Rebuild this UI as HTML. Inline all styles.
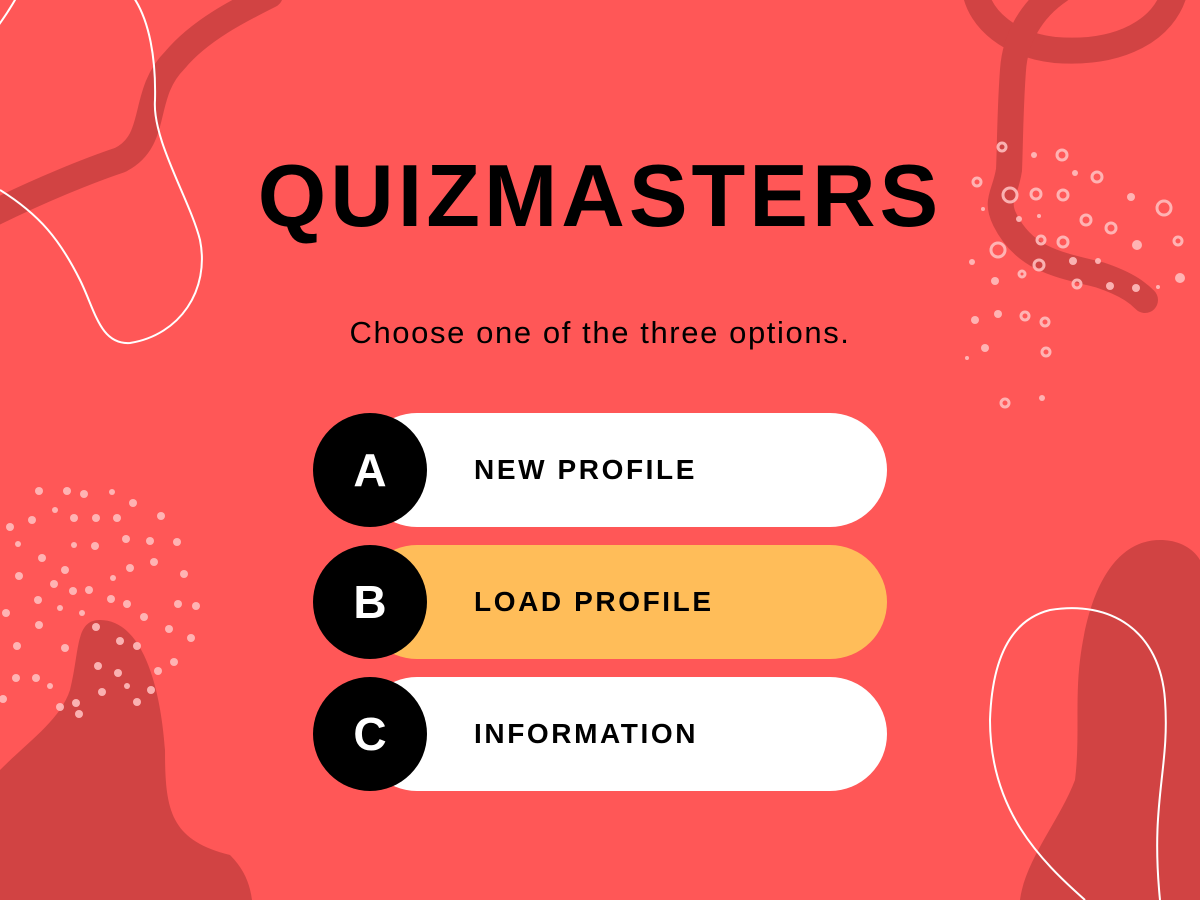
<!DOCTYPE html>
<html><head><meta charset="utf-8"><style>
html,body{margin:0;padding:0}
body{width:1200px;height:900px;background:#FF5757;position:relative;overflow:hidden;font-family:"Liberation Sans",sans-serif}
svg.bg{position:absolute;left:0;top:0}
.title{position:absolute;left:0;width:1200px;top:146px;text-align:center;font-size:88px;font-weight:bold;letter-spacing:4px;color:#000;line-height:100px}
.sub{position:absolute;left:0;width:1200px;top:313px;text-align:center;font-size:31px;letter-spacing:1.6px;color:#000;line-height:40px}
.pill{position:absolute;left:360px;width:527px;height:114px;border-radius:57px;background:#fff}
.circ{position:absolute;left:313px;width:114px;height:114px;border-radius:50%;background:#000;color:#fff;font-weight:bold;font-size:46px;line-height:114px;text-align:center}
.lbl{position:absolute;left:474px;font-weight:bold;font-size:28px;line-height:114px;color:#000;letter-spacing:2.6px}
</style></head><body>
<svg class="bg" width="1200" height="900" viewBox="0 0 1200 900">
<g fill="none" stroke="#D14343" stroke-width="26" stroke-linecap="round">
<path d="M-10 215 C40 190 90 170 120 160 C160 140 140 95 175 60 C200 30 240 10 270 -5"/>
<path d="M1175 -10 C1165 30 1120 55 1055 50 C1010 45 980 20 975 -10"/>
<path d="M1060 -10 C1030 10 1015 40 1013 70 C1010 110 1010 150 1009 170 C1005 195 995 200 1005 220 C1025 260 1060 265 1100 275 C1130 285 1140 295 1145 300"/>
</g>
<path d="M0 770 C30 740 60 720 70 690 C80 650 75 620 100 620 C140 620 160 680 165 750 C165 810 170 840 230 855 C245 870 250 885 252 900 L0 900 Z" fill="#D14343"/>
<path d="M1020 900 C1025 860 1060 820 1075 780 C1080 740 1075 700 1080 660 C1090 580 1120 540 1160 540 C1190 540 1200 560 1200 560 L1200 900 Z" fill="#D14343"/>
<g fill="none" stroke="#fff" stroke-width="2">
<path d="M-5 30 C10 10 18 -5 20 -10 M132 -5 C150 20 156 60 155 100 C152 140 190 200 200 240 C210 290 180 335 130 343 C100 345 95 310 80 280 C60 240 40 215 0 190"/>
<path d="M1085 900 C1040 860 990 810 990 720 C992 660 1010 620 1050 610 C1110 600 1160 630 1165 700 C1170 770 1150 800 1160 900"/>
</g>
<g fill="#FFBDBD" opacity="0.9">
<circle cx="39" cy="491" r="4"/><circle cx="67" cy="491" r="4"/><circle cx="84" cy="494" r="4"/><circle cx="112" cy="492" r="3"/><circle cx="133" cy="503" r="4"/>
<circle cx="10" cy="527" r="4"/><circle cx="32" cy="520" r="4"/><circle cx="55" cy="510" r="3"/><circle cx="74" cy="518" r="4"/><circle cx="96" cy="518" r="4"/><circle cx="117" cy="518" r="4"/><circle cx="161" cy="516" r="4"/>
<circle cx="18" cy="544" r="3"/><circle cx="42" cy="558" r="4"/><circle cx="65" cy="570" r="4"/><circle cx="74" cy="545" r="3"/><circle cx="95" cy="546" r="4"/><circle cx="126" cy="539" r="4"/><circle cx="150" cy="541" r="4"/><circle cx="177" cy="542" r="4"/>
<circle cx="19" cy="576" r="4"/><circle cx="54" cy="584" r="4"/><circle cx="73" cy="591" r="4"/><circle cx="89" cy="590" r="4"/><circle cx="113" cy="578" r="3"/><circle cx="130" cy="568" r="4"/><circle cx="154" cy="562" r="4"/><circle cx="184" cy="574" r="4"/>
<circle cx="38" cy="600" r="4"/><circle cx="60" cy="608" r="3"/><circle cx="82" cy="613" r="3"/><circle cx="111" cy="599" r="4"/><circle cx="127" cy="604" r="4"/><circle cx="144" cy="617" r="4"/><circle cx="169" cy="629" r="4"/><circle cx="178" cy="604" r="4"/><circle cx="196" cy="606" r="4"/><circle cx="191" cy="638" r="4"/>
<circle cx="6" cy="613" r="4"/><circle cx="17" cy="646" r="4"/><circle cx="39" cy="625" r="4"/><circle cx="65" cy="648" r="4"/><circle cx="96" cy="627" r="4"/><circle cx="120" cy="641" r="4"/><circle cx="137" cy="646" r="4"/><circle cx="158" cy="671" r="4"/><circle cx="174" cy="662" r="4"/>
<circle cx="3" cy="699" r="4"/><circle cx="16" cy="678" r="4"/><circle cx="36" cy="678" r="4"/><circle cx="50" cy="686" r="3"/><circle cx="76" cy="703" r="4"/><circle cx="98" cy="666" r="4"/><circle cx="102" cy="692" r="4"/><circle cx="118" cy="673" r="4"/><circle cx="127" cy="686" r="3"/><circle cx="137" cy="702" r="4"/><circle cx="151" cy="690" r="4"/><circle cx="60" cy="707" r="4"/><circle cx="79" cy="714" r="4"/>
</g>
<g fill="none" stroke="#FFBDBD" stroke-width="3" opacity="0.9">
<circle cx="1002" cy="147" r="4"/><circle cx="1062" cy="155" r="5"/><circle cx="1097" cy="177" r="5"/><circle cx="977" cy="182" r="4"/><circle cx="1010" cy="195" r="7"/><circle cx="1036" cy="194" r="5"/><circle cx="1063" cy="195" r="5"/><circle cx="1164" cy="208" r="7"/>
<circle cx="1086" cy="220" r="5"/><circle cx="1111" cy="228" r="5"/><circle cx="1178" cy="241" r="4"/><circle cx="998" cy="250" r="7"/><circle cx="1041" cy="240" r="4"/><circle cx="1063" cy="242" r="5"/><circle cx="1039" cy="265" r="5"/><circle cx="1077" cy="284" r="4"/><circle cx="1022" cy="274" r="3"/><circle cx="1045" cy="322" r="4"/><circle cx="1025" cy="316" r="4"/><circle cx="1046" cy="352" r="4"/><circle cx="1005" cy="403" r="4"/>
</g>
<g fill="#FFBDBD" opacity="0.9">
<circle cx="1034" cy="155" r="3"/><circle cx="1075" cy="173" r="3"/><circle cx="1131" cy="197" r="4"/><circle cx="983" cy="209" r="2"/><circle cx="1039" cy="216" r="2"/><circle cx="1019" cy="219" r="3"/><circle cx="1137" cy="245" r="5"/><circle cx="972" cy="262" r="3"/><circle cx="1073" cy="261" r="4"/><circle cx="1098" cy="261" r="3"/><circle cx="995" cy="281" r="4"/><circle cx="1110" cy="286" r="4"/><circle cx="1136" cy="288" r="4"/><circle cx="1158" cy="287" r="2"/><circle cx="1180" cy="278" r="5"/><circle cx="975" cy="320" r="4"/><circle cx="998" cy="314" r="4"/><circle cx="985" cy="348" r="4"/><circle cx="967" cy="358" r="2"/><circle cx="1042" cy="398" r="3"/>
</g>
</svg>
<div class="title">QUIZMASTERS</div>
<div class="sub">Choose one of the three options.</div>
<div class="pill" style="top:413px"></div>
<div class="circ" style="top:413px">A</div>
<div class="lbl" style="top:413px">NEW PROFILE</div>
<div class="pill" style="top:545px;background:#FFBD59"></div>
<div class="circ" style="top:545px">B</div>
<div class="lbl" style="top:545px">LOAD PROFILE</div>
<div class="pill" style="top:677px"></div>
<div class="circ" style="top:677px">C</div>
<div class="lbl" style="top:677px">INFORMATION</div>
</body></html>
